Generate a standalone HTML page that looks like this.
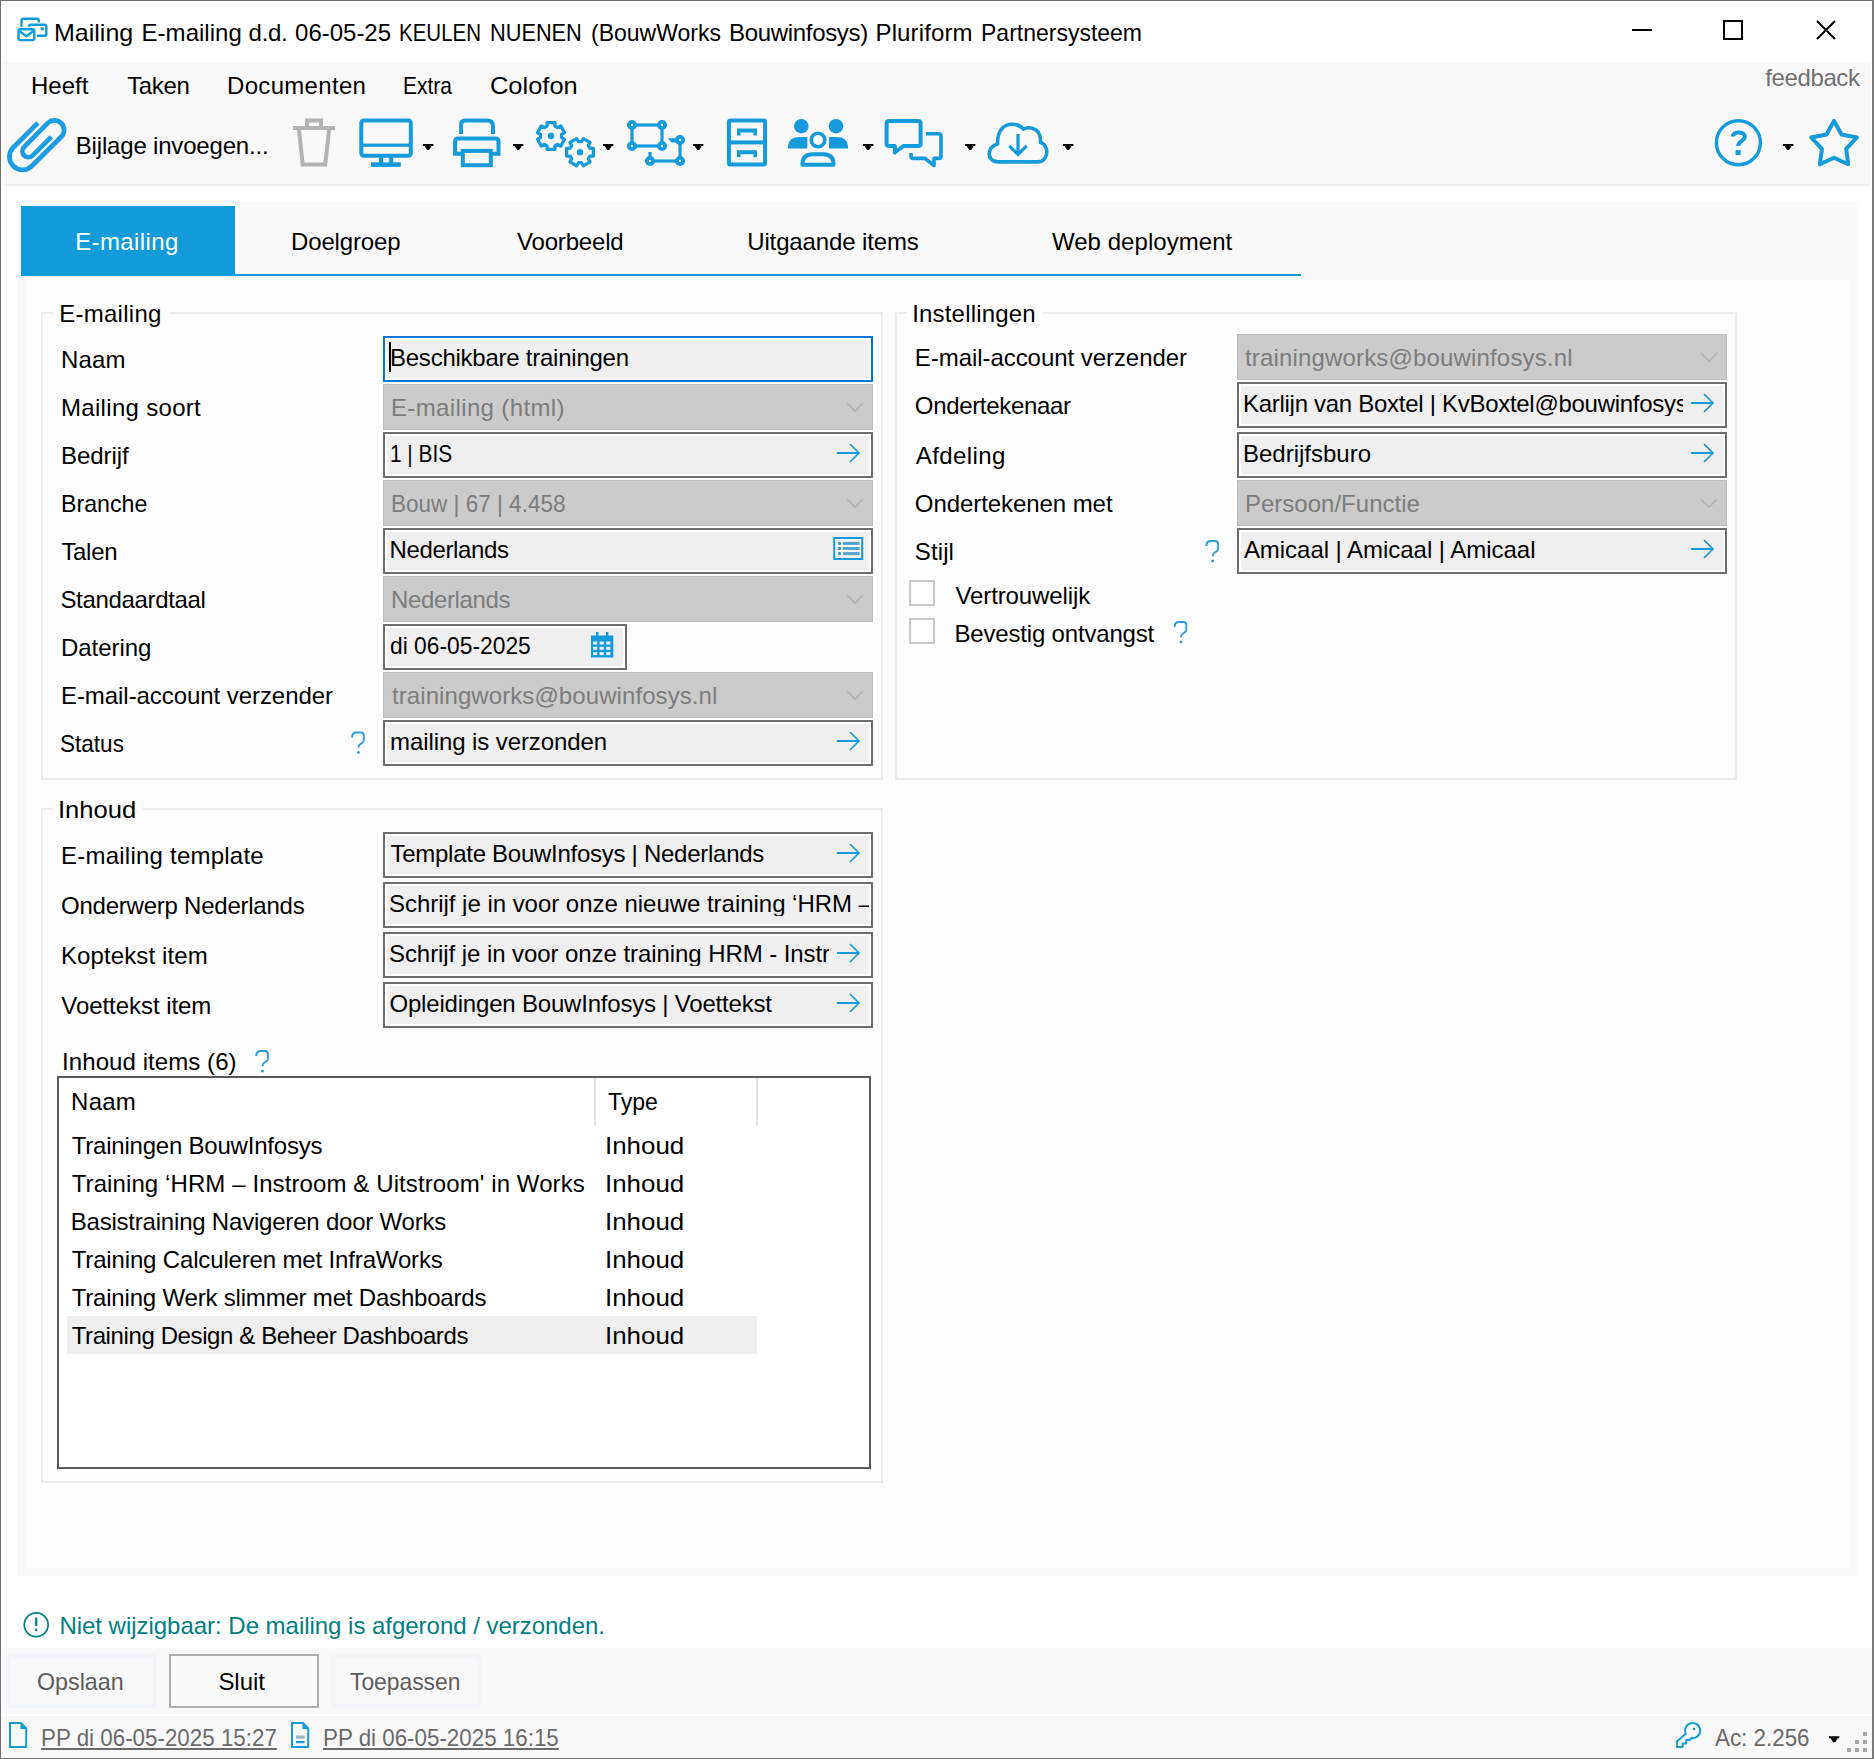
<!DOCTYPE html>
<html lang="nl"><head><meta charset="utf-8"><title>Mailing E-mailing</title>
<style>html,body{margin:0;padding:0;font-family:"Liberation Sans",sans-serif}
body{width:1874px;height:1759px;position:relative;overflow:hidden;background:#fff;font-family:"Liberation Sans",sans-serif;font-size:24px;line-height:24px;color:#000}
.b{position:absolute;box-sizing:border-box}
.t{position:absolute;white-space:pre;font-size:24px;line-height:24px;height:24px;transform-origin:0 0}
svg.ov{position:absolute;left:0;top:0}
</style></head>
<body>
<div class="b" style="left:2px;top:62px;width:1869px;height:124px;background:#f9f9f9;"></div>
<div class="b" style="left:5px;top:184px;width:1864px;height:2px;background:#eeeeee;"></div>
<div class="b" style="left:17px;top:202px;width:1840px;height:1374px;background:#f9f9f9;"></div>
<div class="b" style="left:25px;top:280px;width:1824px;height:1288px;background:#fdfdfd;"></div>
<div class="b" style="left:21px;top:206px;width:214px;height:70px;background:#129ad9;"></div>
<div class="b" style="left:21px;top:274px;width:1280px;height:2px;background:#129ad9;"></div>
<div class="b" style="left:2px;top:1648px;width:1870px;height:66px;background:#f9f9f9;"></div>
<div class="b" style="left:2px;top:1716px;width:1870px;height:43px;background:#f9f9f9;"></div>
<div class="b" style="left:41px;top:312px;width:842px;height:468px;border:2px solid #ececec;"></div>
<div class="b" style="left:53px;top:312px;width:116px;height:2px;background:#fdfdfd;"></div>
<div class="b" style="left:895px;top:312px;width:842px;height:468px;border:2px solid #ececec;"></div>
<div class="b" style="left:907px;top:312px;width:136px;height:2px;background:#fdfdfd;"></div>
<div class="b" style="left:41px;top:808px;width:842px;height:675px;border:2px solid #ececec;"></div>
<div class="b" style="left:53px;top:808px;width:90px;height:2px;background:#fdfdfd;"></div>
<div class="b" style="left:383px;top:336px;width:490px;height:46px;background:#efefef;border:2px solid #0078d7;box-shadow:inset 0 0 0 2px #fff;"></div>
<div class="b" style="left:383px;top:384px;width:490px;height:46px;background:#cbcbcb;border:1px solid #bdbdbd;"></div>
<div class="b" style="left:383px;top:432px;width:490px;height:46px;background:#efefef;border:2px solid #6e6e6e;box-shadow:inset 0 0 0 2px #fff;"></div>
<div class="b" style="left:383px;top:480px;width:490px;height:46px;background:#cbcbcb;border:1px solid #bdbdbd;"></div>
<div class="b" style="left:383px;top:528px;width:490px;height:46px;background:#efefef;border:2px solid #6e6e6e;box-shadow:inset 0 0 0 2px #fff;"></div>
<div class="b" style="left:383px;top:576px;width:490px;height:46px;background:#cbcbcb;border:1px solid #bdbdbd;"></div>
<div class="b" style="left:383px;top:624px;width:244px;height:46px;background:#efefef;border:2px solid #6e6e6e;box-shadow:inset 0 0 0 2px #fff;"></div>
<div class="b" style="left:383px;top:672px;width:490px;height:46px;background:#cbcbcb;border:1px solid #bdbdbd;"></div>
<div class="b" style="left:383px;top:720px;width:490px;height:46px;background:#efefef;border:2px solid #6e6e6e;box-shadow:inset 0 0 0 2px #fff;"></div>
<div class="b" style="left:389px;top:342px;width:2px;height:30px;background:#000;"></div>
<div class="b" style="left:1237px;top:334px;width:490px;height:46px;background:#cbcbcb;border:1px solid #bdbdbd;"></div>
<div class="b" style="left:1237px;top:382px;width:490px;height:46px;background:#efefef;border:2px solid #6e6e6e;box-shadow:inset 0 0 0 2px #fff;"></div>
<div class="b" style="left:1237px;top:432px;width:490px;height:46px;background:#efefef;border:2px solid #6e6e6e;box-shadow:inset 0 0 0 2px #fff;"></div>
<div class="b" style="left:1237px;top:480px;width:490px;height:46px;background:#cbcbcb;border:1px solid #bdbdbd;"></div>
<div class="b" style="left:1237px;top:528px;width:490px;height:46px;background:#efefef;border:2px solid #6e6e6e;box-shadow:inset 0 0 0 2px #fff;"></div>
<div class="b" style="left:383px;top:832px;width:490px;height:46px;background:#efefef;border:2px solid #6e6e6e;box-shadow:inset 0 0 0 2px #fff;"></div>
<div class="b" style="left:383px;top:882px;width:490px;height:46px;background:#efefef;border:2px solid #6e6e6e;box-shadow:inset 0 0 0 2px #fff;"></div>
<div class="b" style="left:383px;top:932px;width:490px;height:46px;background:#efefef;border:2px solid #6e6e6e;box-shadow:inset 0 0 0 2px #fff;"></div>
<div class="b" style="left:383px;top:982px;width:490px;height:46px;background:#efefef;border:2px solid #6e6e6e;box-shadow:inset 0 0 0 2px #fff;"></div>
<div class="b" style="left:909px;top:580px;width:26px;height:26px;background:#fff;border:2px solid #c9c9c9;"></div>
<div class="b" style="left:909px;top:618px;width:26px;height:26px;background:#fff;border:2px solid #c9c9c9;"></div>
<div class="b" style="left:57px;top:1076px;width:814px;height:393px;background:#fff;border:2px solid #5a5a5a;"></div>
<div class="b" style="left:67px;top:1316px;width:690px;height:38px;background:#efefef;"></div>
<div class="b" style="left:594px;top:1078px;width:2px;height:48px;background:#e3e3e3;"></div>
<div class="b" style="left:756px;top:1078px;width:2px;height:48px;background:#e3e3e3;"></div>
<div class="b" style="left:7px;top:1654px;width:150px;height:54px;background:#f9f9f9;border:4px solid #f2f6fb;"></div>
<div class="b" style="left:169px;top:1654px;width:150px;height:54px;background:#fbfbfb;border:2px solid #adadad;"></div>
<div class="b" style="left:331px;top:1654px;width:150px;height:54px;background:#f9f9f9;border:4px solid #f4f6fa;"></div>
<div class="b" style="left:0px;top:1714px;width:1874px;height:2px;background:#fff;"></div>
<div class="b" style="left:0px;top:0px;width:1874px;height:1px;background:#6f6f6f;"></div>
<div class="b" style="left:0px;top:0px;width:1px;height:1759px;background:#6f6f6f;"></div>
<div class="b" style="left:1872px;top:0px;width:2px;height:1759px;background:#7a7a7a;"></div>
<div class="b" style="left:0px;top:1758px;width:1874px;height:1px;background:#777;"></div>
<svg class="ov" width="1874" height="1759" viewBox="0 0 1874 1759">
<path d="M847 403 L855 411 L863 403" fill="none" stroke="#b2b2b2" stroke-width="1.6"/>
<rect x="837" y="452" width="22" height="2" fill="#159bdb"/><path d="M850 444 L859 453 L850 462" fill="none" stroke="#159bdb" stroke-width="1.6"/>
<path d="M847 499 L855 507 L863 499" fill="none" stroke="#b2b2b2" stroke-width="1.6"/>
<path d="M847 595 L855 603 L863 595" fill="none" stroke="#b2b2b2" stroke-width="1.6"/>
<path d="M847 691 L855 699 L863 691" fill="none" stroke="#b2b2b2" stroke-width="1.6"/>
<rect x="837" y="740" width="22" height="2" fill="#159bdb"/><path d="M850 732 L859 741 L850 750" fill="none" stroke="#159bdb" stroke-width="1.6"/>
<path d="M1701 353 L1709 361 L1717 353" fill="none" stroke="#b2b2b2" stroke-width="1.6"/>
<rect x="1691" y="402" width="22" height="2" fill="#159bdb"/><path d="M1704 394 L1713 403 L1704 412" fill="none" stroke="#159bdb" stroke-width="1.6"/>
<rect x="1691" y="452" width="22" height="2" fill="#159bdb"/><path d="M1704 444 L1713 453 L1704 462" fill="none" stroke="#159bdb" stroke-width="1.6"/>
<path d="M1701 499 L1709 507 L1717 499" fill="none" stroke="#b2b2b2" stroke-width="1.6"/>
<rect x="1691" y="548" width="22" height="2" fill="#159bdb"/><path d="M1704 540 L1713 549 L1704 558" fill="none" stroke="#159bdb" stroke-width="1.6"/>
<rect x="837" y="852" width="22" height="2" fill="#159bdb"/><path d="M850 844 L859 853 L850 862" fill="none" stroke="#159bdb" stroke-width="1.6"/>
<rect x="837" y="952" width="22" height="2" fill="#159bdb"/><path d="M850 944 L859 953 L850 962" fill="none" stroke="#159bdb" stroke-width="1.6"/>
<rect x="837" y="1002" width="22" height="2" fill="#159bdb"/><path d="M850 994 L859 1003 L850 1012" fill="none" stroke="#159bdb" stroke-width="1.6"/>
<path d="M352.1 737.5 Q352.1 732.5 356.5 732.5 H361.0 Q363.8 732.5 363.8 735.3 V740.2 Q363.8 742 362.1 743 L360.1 744.2 Q358.5 745.2 358.5 747.8" fill="none" stroke="#2d9cdb" stroke-width="1.9"/><rect x="357.1" y="751.3" width="2.6" height="2.4" fill="#2d9cdb"/>
<path d="M1206.3999999999999 546.0 Q1206.3999999999999 541.0 1210.8 541.0 H1215.3 Q1218.1 541.0 1218.1 543.8 V548.7 Q1218.1 550.5 1216.3999999999999 551.5 L1214.3999999999999 552.7 Q1212.8 553.7 1212.8 556.3" fill="none" stroke="#2d9cdb" stroke-width="1.9"/><rect x="1211.3999999999999" y="559.8" width="2.6" height="2.4" fill="#2d9cdb"/>
<path d="M1174.6 627.0 Q1174.6 622.0 1179 622.0 H1183.5 Q1186.3 622.0 1186.3 624.8 V629.7 Q1186.3 631.5 1184.6 632.5 L1182.6 633.7 Q1181 634.7 1181 637.3" fill="none" stroke="#2d9cdb" stroke-width="1.9"/><rect x="1179.6" y="640.8" width="2.6" height="2.4" fill="#2d9cdb"/>
<path d="M256.2 1056.0 Q256.2 1051.0 260.6 1051.0 H265.1 Q267.9 1051.0 267.9 1053.8 V1058.7 Q267.9 1060.5 266.2 1061.5 L264.2 1062.7 Q262.6 1063.7 262.6 1066.3" fill="none" stroke="#2d9cdb" stroke-width="1.9"/><rect x="261.2" y="1069.8" width="2.6" height="2.4" fill="#2d9cdb"/>
<path d="M21.5 25.8 V20.6 Q21.5 18.7 23.4 18.7 H36.9 Q38.8 18.7 38.8 20.6 V21.4" fill="none" stroke="#119adc" stroke-width="2.4" stroke-linecap="round"/>
<path d="M29 25.8 Q29.4 24.8 31 24.8 H44.4 Q46.3 24.8 46.3 26.7 V33.9 Q46.3 35.8 44.4 35.8 H38" fill="none" stroke="#119adc" stroke-width="2.4" stroke-linecap="round"/>
<rect x="40.7" y="27.3" width="3.1" height="3.1" rx="0.8" fill="#119adc"/>
<rect x="18.5" y="29.2" width="15.8" height="10.9" rx="2" fill="none" stroke="#119adc" stroke-width="2.4"/>
<path d="M19.6 31.3 L26.4 36.3 L33.2 31.3" fill="none" stroke="#119adc" stroke-width="2.4" stroke-linejoin="round"/>
<rect x="1632" y="29" width="20" height="2" fill="#000"/>
<rect x="1724" y="21" width="18" height="18" fill="none" stroke="#000" stroke-width="2"/>
<path d="M1817 21 L1835 39 M1835 21 L1817 39" stroke="#000" stroke-width="2" fill="none"/>
<path d="M37.93 122.85 L13.04 147.74 A13.1 13.1 0 0 0 31.56 166.26 L61.29 136.79 A9.6 9.6 0 0 0 47.71 123.21 L24.06 147.16 A6.0 6.0 0 0 0 32.54 155.64 L51.35 136.83" fill="none" stroke="#1c9ce5" stroke-width="4.7" />
<rect x="293" y="126" width="42" height="4" fill="#b3b3b3"/>
<path d="M307 127 V120.5 H321 V127" fill="none" stroke="#b3b3b3" stroke-width="4" />
<path d="M299 130 L302.7 164.5 H325.3 L329 130" fill="none" stroke="#b3b3b3" stroke-width="4" stroke-linejoin="miter"/>
<rect x="361.3" y="120.5" width="49.5" height="35.3" rx="2.5" fill="none" stroke="#159bdb" stroke-width="4"/>
<rect x="361" y="143.6" width="50" height="3.2" fill="#159bdb"/>
<rect x="379" y="157" width="4" height="6" fill="#159bdb"/><rect x="389.2" y="157" width="4" height="6" fill="#159bdb"/>
<rect x="371" y="162.3" width="29.8" height="4.6" fill="#159bdb"/>
<path d="M423 144 H433.4 V146 H431.79999999999995 L429.2 150 H427.2 L424.6 146 H423 Z" fill="#000"/>
<path d="M461.1 134 V124.5 Q461.1 120.5 465.1 120.5 H487 Q493 120.5 493 126.5 V134" fill="none" stroke="#159bdb" stroke-width="4" />
<path d="M462.8 153.7 H455.1 V141.5 Q455.1 138.5 458.1 138.5 H495.5 Q498.5 138.5 498.5 141.5 V153.7 H491" fill="none" stroke="#159bdb" stroke-width="4" />
<rect x="462.8" y="150.9" width="28" height="14.3" fill="none" stroke="#159bdb" stroke-width="4"/>
<path d="M513 144 H523.4 V146 H521.8 L519.2 150 H517.2 L514.6 146 H513 Z" fill="#000"/>
<path d="M547.1 122.6 L554.9 122.6 L554.9 126.1 L557.6 127.7 L560.7 125.9 L564.6 132.7 L561.5 134.5 L561.5 137.5 L564.6 139.3 L560.7 146.1 L557.6 144.3 L554.9 145.9 L554.9 149.4 L547.1 149.4 L547.1 145.9 L544.4 144.3 L541.3 146.1 L537.4 139.3 L540.5 137.5 L540.5 134.5 L537.4 132.7 L541.3 125.9 L544.4 127.7 L547.1 126.1 Z" fill="none" stroke="#159bdb" stroke-width="3.2" stroke-linejoin="round"/>
<circle cx="551" cy="136" r="3.2" fill="#159bdb"/>
<path d="M583.3 138.6 L590.1 142.5 L588.3 145.6 L589.9 148.3 L593.4 148.3 L593.4 156.1 L589.9 156.1 L588.3 158.8 L590.1 161.9 L583.3 165.8 L581.5 162.7 L578.5 162.7 L576.7 165.8 L569.9 161.9 L571.7 158.8 L570.1 156.1 L566.6 156.1 L566.6 148.3 L570.1 148.3 L571.7 145.6 L569.9 142.5 L576.7 138.6 L578.5 141.7 L581.5 141.7 Z" fill="none" stroke="#159bdb" stroke-width="3.2" stroke-linejoin="round"/>
<circle cx="580" cy="152.2" r="3.2" fill="#159bdb"/>
<path d="M603 144 H613.4 V146 H611.8 L609.2 150 H607.2 L604.6 146 H603 Z" fill="#000"/>
<path d="M632 125 L662 125" fill="none" stroke="#159bdb" stroke-width="3.2" />
<path d="M632 125 L632 146" fill="none" stroke="#159bdb" stroke-width="3.2" />
<path d="M662 125 L662 146" fill="none" stroke="#159bdb" stroke-width="3.2" />
<path d="M632 146 L662 146" fill="none" stroke="#159bdb" stroke-width="3.2" />
<path d="M680 140 L680 161" fill="none" stroke="#159bdb" stroke-width="3.2" />
<path d="M650 161 L680 161" fill="none" stroke="#159bdb" stroke-width="3.2" />
<path d="M650 161 V152" fill="none" stroke="#159bdb" stroke-width="3.2" />
<path d="M668 138.2 H676 V142.5 H671.5 Z" fill="#159bdb"/>
<circle cx="632" cy="125" r="3.1" fill="#f9f9f9" stroke="#159bdb" stroke-width="3.9"/>
<circle cx="662" cy="125" r="3.1" fill="#f9f9f9" stroke="#159bdb" stroke-width="3.9"/>
<circle cx="632" cy="146" r="3.1" fill="#f9f9f9" stroke="#159bdb" stroke-width="3.9"/>
<circle cx="662" cy="146" r="3.1" fill="#f9f9f9" stroke="#159bdb" stroke-width="3.9"/>
<circle cx="680" cy="140" r="3.1" fill="#f9f9f9" stroke="#159bdb" stroke-width="3.9"/>
<circle cx="650" cy="161" r="3.1" fill="#f9f9f9" stroke="#159bdb" stroke-width="3.9"/>
<circle cx="680" cy="161" r="3.1" fill="#f9f9f9" stroke="#159bdb" stroke-width="3.9"/>
<path d="M693 144 H703.4 V146 H701.8 L699.2 150 H697.2 L694.6 146 H693 Z" fill="#000"/>
<rect x="728.9" y="120.5" width="36.2" height="44" rx="1.5" fill="none" stroke="#159bdb" stroke-width="4"/>
<rect x="728" y="140.4" width="38" height="4" fill="#159bdb"/>
<path d="M737 128.4 H757 V135.4 H753.5 V132.4 H740.5 V135.4 H737 Z" fill="#159bdb"/>
<path d="M737 150.3 H757 V157.3 H753.5 V154.3 H740.5 V157.3 H737 Z" fill="#159bdb"/>
<circle cx="801.3" cy="126.2" r="7.3" fill="#159bdb"/><circle cx="836" cy="126.2" r="7.3" fill="#159bdb"/>
<path d="M788 148.4 V146 Q788.5 137 800 137 H807.3 V148.4 Z" fill="#159bdb"/>
<path d="M848 148.4 V146 Q847.5 137 836 137 H829 V148.4 Z" fill="#159bdb"/>
<circle cx="818" cy="140" r="6.8" fill="#f9f9f9" stroke="#159bdb" stroke-width="3.6"/>
<path d="M802.5 164.8 V163 Q803 154.3 813 154.3 H823 Q833 154.3 833.5 163 V164.8 Z" fill="none" stroke="#159bdb" stroke-width="4" stroke-linejoin="round"/>
<path d="M863 144 H873.4 V146 H871.8 L869.2 150 H867.2 L864.6 146 H863 Z" fill="#000"/>
<path d="M886.6 123.5 Q886.6 121 889.1 121 H918.1 Q920.6 121 920.6 123.5 V143.5 Q920.6 146 918.1 146 H903.5 L894.8 152.5 V146 H889.1 Q886.6 146 886.6 143.5 Z" fill="none" stroke="#159bdb" stroke-width="4" stroke-linejoin="round"/>
<path d="M926 133.8 H938.5 Q941 133.8 941 136.3 V155.9 Q941 158.4 938.5 158.4 H934 V165.5 L925 158.4 H913.5 Q911 158.4 911 155.9 V153" fill="none" stroke="#159bdb" stroke-width="3.6" stroke-linejoin="round"/>
<path d="M965 144 H975.4 V146 H973.8 L971.2 150 H969.2 L966.6 146 H965 Z" fill="#000"/>
<path d="M998.5 161.9 C986 161.9 986.5 146.5 997.6 144 C997 131 1003.5 124.3 1012 124.3 C1017.5 124.3 1021 126.3 1023.2 129.2 C1026 127.6 1030 127.6 1032.5 128.4 C1038.5 130 1041 135.5 1040.4 142.6 C1049.6 145 1049 161.9 1037.5 161.9 Z" fill="none" stroke="#159bdb" stroke-width="3.6" stroke-linejoin="round"/>
<path d="M1018 134 V154.5 M1009.3 145.8 L1018 154.5 L1026.7 145.8" fill="none" stroke="#159bdb" stroke-width="3.2" />
<path d="M1063 144 H1073.4 V146 H1071.8000000000002 L1069.2 150 H1067.2 L1064.6 146 H1063 Z" fill="#000"/>
<circle cx="1738.4" cy="142.7" r="22.0" fill="none" stroke="#159bdb" stroke-width="3.4"/>
<path d="M1732.8 136.6 C1732.8 131.0 1744.8 131.0 1744.8 136.8 C1744.8 140.8 1738.2 141.0 1738.2 146.0" fill="none" stroke="#159bdb" stroke-width="4.0" />
<rect x="1735.6" y="150.1" width="5.0" height="5.0" fill="#159bdb"/>
<path d="M1783 144 H1793.4 V146 H1791.8000000000002 L1789.2 150 H1787.2 L1784.6 146 H1783 Z" fill="#000"/>
<path d="M1834.0 120.9 L1841.6 134.5 L1856.9 137.5 L1846.2 148.9 L1848.2 164.3 L1834.0 157.7 L1819.9 164.3 L1821.9 148.9 L1811.2 137.5 L1826.5 134.5 Z" fill="none" stroke="#159bdb" stroke-width="4.0" stroke-linejoin="round"/>
<rect x="834.2" y="538" width="28" height="21" fill="#f4f4f4" stroke="#159bdb" stroke-width="2"/>
<rect x="838.2" y="541.9" width="2.6" height="3" fill="#159bdb"/><rect x="843" y="541.9" width="16.5" height="3" fill="#4fa3d1"/>
<rect x="838.2" y="547.0" width="2.6" height="3" fill="#159bdb"/><rect x="843" y="547.0" width="16.5" height="3" fill="#4fa3d1"/>
<rect x="838.2" y="552.1" width="2.6" height="3" fill="#159bdb"/><rect x="843" y="552.1" width="16.5" height="3" fill="#4fa3d1"/>
<rect x="591" y="635.5" width="22.3" height="22" fill="#159bdb"/>
<rect x="596" y="632" width="2.4" height="5" fill="#159bdb"/><rect x="606" y="632" width="2.4" height="5" fill="#159bdb"/>
<rect x="593.0" y="641.5" width="4.2" height="3" fill="#e9eef2"/>
<rect x="599.6" y="641.5" width="4.2" height="3" fill="#e9eef2"/>
<rect x="606.2" y="641.5" width="4.2" height="3" fill="#e9eef2"/>
<rect x="593.0" y="646.8" width="4.2" height="3" fill="#e9eef2"/>
<rect x="599.6" y="646.8" width="4.2" height="3" fill="#e9eef2"/>
<rect x="606.2" y="646.8" width="4.2" height="3" fill="#e9eef2"/>
<rect x="593.0" y="652.1" width="4.2" height="3" fill="#e9eef2"/>
<rect x="599.6" y="652.1" width="4.2" height="3" fill="#e9eef2"/>
<rect x="606.2" y="652.1" width="4.2" height="3" fill="#e9eef2"/>
<circle cx="36.2" cy="1624.7" r="11.9" fill="none" stroke="#008080" stroke-width="1.7"/>
<rect x="35.1" y="1617.5" width="2.2" height="8.5" fill="#008080"/><rect x="35.1" y="1628.6" width="2.2" height="2.6" fill="#008080"/>
<path d="M10 1723 H21 L26.2 1728.5 V1747 H10 Z" fill="none" stroke="#159bdb" stroke-width="2" />
<path d="M20.5 1723 L26.5 1729 H20.5 Z" fill="#159bdb"/>
<path d="M292 1723 H303 L308.2 1728.5 V1747 H292 Z" fill="none" stroke="#159bdb" stroke-width="2" />
<path d="M302.5 1723 L308.5 1729 H302.5 Z" fill="#159bdb"/>
<rect x="296" y="1735.5" width="8.5" height="3.2" fill="#9ab4c4"/><rect x="296" y="1741" width="8.5" height="2.2" fill="#159bdb"/>
<path d="M1685.7 1733.8 L1676.9 1741.4 V1747 H1682.6 V1743.6 H1686.2 V1740.1 H1689.6 L1691.3 1738.1 A7.6 7.6 0 1 0 1685.7 1733.8 Z" fill="none" stroke="#159bdb" stroke-width="2.0" stroke-linejoin="round"/>
<circle cx="1694" cy="1729" r="1.3" fill="#159bdb"/>
<path d="M1829 1736.3 H1839.4 V1738.3 H1837.8000000000002 L1835.2 1742.3 H1833.2 L1830.6 1738.3 H1829 Z" fill="#000"/>
<rect x="1863" y="1732" width="4" height="4" fill="#a6a6a6"/>
<rect x="1855" y="1740" width="4" height="4" fill="#a6a6a6"/>
<rect x="1863" y="1740" width="4" height="4" fill="#a6a6a6"/>
<rect x="1847" y="1748" width="4" height="4" fill="#a6a6a6"/>
<rect x="1855" y="1748" width="4" height="4" fill="#a6a6a6"/>
<rect x="1863" y="1748" width="4" height="4" fill="#a6a6a6"/>
</svg>
<span class="t" style="left:54.36px;top:21.00px;transform:scaleX(1.0423);">Mailing</span>
<span class="t" style="left:141.60px;top:21.00px;letter-spacing:0.015px;">E-mailing</span>
<span class="t" style="left:248.60px;top:21.00px;letter-spacing:-0.288px;">d.d.</span>
<span class="t" style="left:295.10px;top:21.00px;letter-spacing:-0.018px;">06-05-25</span>
<span class="t" style="left:399.45px;top:21.00px;transform:scaleX(0.8548);">KEULEN</span>
<span class="t" style="left:489.89px;top:21.00px;transform:scaleX(0.9060);">NUENEN</span>
<span class="t" style="left:590.84px;top:21.00px;transform:scaleX(0.9585);">(BouwWorks</span>
<span class="t" style="left:729.10px;top:21.00px;letter-spacing:-0.330px;">Bouwinfosys)</span>
<span class="t" style="left:875.50px;top:21.00px;letter-spacing:0.123px;">Pluriform</span>
<span class="t" style="left:980.74px;top:21.00px;transform:scaleX(0.9581);">Partnersysteem</span>
<span class="t" style="left:31.00px;top:74.00px;letter-spacing:0.026px;">Heeft</span>
<span class="t" style="left:127.20px;top:74.00px;letter-spacing:-0.349px;">Taken</span>
<span class="t" style="left:227.00px;top:74.00px;letter-spacing:0.319px;">Documenten</span>
<span class="t" style="left:402.83px;top:74.00px;transform:scaleX(0.8748);">Extra</span>
<span class="t" style="left:490.44px;top:74.00px;transform:scaleX(1.0600);">Colofon</span>
<span class="t" style="left:1765.20px;top:66.00px;letter-spacing:-0.372px;color:#707070;">feedback</span>
<span class="t" style="left:75.80px;top:134.00px;letter-spacing:-0.182px;">Bijlage invoegen...</span>
<span class="t" style="left:75.20px;top:230.00px;letter-spacing:0.390px;color:#fff;">E-mailing</span>
<span class="t" style="left:291.00px;top:230.00px;letter-spacing:-0.149px;">Doelgroep</span>
<span class="t" style="left:517.00px;top:230.00px;letter-spacing:-0.181px;">Voorbeeld</span>
<span class="t" style="left:747.20px;top:230.00px;letter-spacing:-0.130px;">Uitgaande items</span>
<span class="t" style="left:1051.90px;top:230.00px;letter-spacing:0.054px;">Web deployment</span>
<span class="t" style="left:59.20px;top:302.00px;letter-spacing:0.265px;">E-mailing</span>
<span class="t" style="left:912.20px;top:302.00px;letter-spacing:0.185px;">Instellingen</span>
<span class="t" style="left:58.07px;top:798.00px;transform:scaleX(1.0648);">Inhoud</span>
<span class="t" style="left:61.00px;top:348.00px;letter-spacing:0.124px;">Naam</span>
<span class="t" style="left:61.00px;top:396.00px;letter-spacing:0.309px;">Mailing soort</span>
<span class="t" style="left:61.00px;top:444.00px;letter-spacing:-0.077px;">Bedrijf</span>
<span class="t" style="left:61.03px;top:492.00px;transform:scaleX(0.9654);">Branche</span>
<span class="t" style="left:61.40px;top:540.00px;letter-spacing:-0.307px;">Talen</span>
<span class="t" style="left:60.40px;top:588.00px;letter-spacing:-0.326px;">Standaardtaal</span>
<span class="t" style="left:61.00px;top:636.00px;letter-spacing:-0.052px;">Datering</span>
<span class="t" style="left:61.00px;top:684.00px;letter-spacing:-0.063px;">E-mail-account verzender</span>
<span class="t" style="left:60.46px;top:732.00px;transform:scaleX(0.9398);">Status</span>
<span class="t" style="left:390.00px;top:346.00px;letter-spacing:-0.243px;">Beschikbare trainingen</span>
<span class="t" style="left:391.00px;top:396.00px;letter-spacing:0.365px;color:#7d7d7d;">E-mailing (html)</span>
<span class="t" style="left:390.13px;top:442.00px;transform:scaleX(0.8679);">1 | BIS</span>
<span class="t" style="left:391.06px;top:492.00px;transform:scaleX(0.9383);color:#7d7d7d;">Bouw | 67 | 4.458</span>
<span class="t" style="left:389.50px;top:538.00px;letter-spacing:-0.360px;">Nederlands</span>
<span class="t" style="left:391.00px;top:588.00px;letter-spacing:-0.360px;color:#7d7d7d;">Nederlands</span>
<span class="t" style="left:389.55px;top:634.00px;transform:scaleX(0.9505);">di 06-05-2025</span>
<span class="t" style="left:392.00px;top:684.00px;letter-spacing:0.080px;color:#7d7d7d;">trainingworks@bouwinfosys.nl</span>
<span class="t" style="left:390.00px;top:730.00px;letter-spacing:-0.086px;">mailing is verzonden</span>
<span class="t" style="left:914.80px;top:346.00px;letter-spacing:-0.054px;">E-mail-account verzender</span>
<span class="t" style="left:914.80px;top:394.00px;letter-spacing:-0.326px;">Ondertekenaar</span>
<span class="t" style="left:915.80px;top:444.00px;letter-spacing:0.402px;">Afdeling</span>
<span class="t" style="left:914.80px;top:492.00px;letter-spacing:-0.068px;">Ondertekenen met</span>
<span class="t" style="left:914.80px;top:540.00px;letter-spacing:0.115px;">Stijl</span>
<span class="t" style="left:1245.00px;top:346.00px;letter-spacing:0.162px;color:#7d7d7d;">trainingworks@bouwinfosys.nl</span>
<span class="t" style="left:1243.00px;top:392.00px;letter-spacing:-0.286px;width:440.0px;overflow:hidden;">Karlijn van Boxtel | KvBoxtel@bouwinfosys.nl</span>
<span class="t" style="left:1243.00px;top:442.00px;letter-spacing:-0.001px;">Bedrijfsburo</span>
<span class="t" style="left:1245.00px;top:492.00px;letter-spacing:0.006px;color:#7d7d7d;">Persoon/Functie</span>
<span class="t" style="left:1243.90px;top:538.00px;letter-spacing:-0.038px;">Amicaal | Amicaal | Amicaal</span>
<span class="t" style="left:955.40px;top:584.00px;letter-spacing:-0.096px;">Vertrouwelijk</span>
<span class="t" style="left:954.40px;top:622.00px;letter-spacing:-0.172px;">Bevestig ontvangst</span>
<span class="t" style="left:61.00px;top:844.00px;letter-spacing:0.229px;">E-mailing template</span>
<span class="t" style="left:61.00px;top:894.00px;letter-spacing:-0.233px;">Onderwerp Nederlands</span>
<span class="t" style="left:61.00px;top:944.00px;letter-spacing:0.108px;">Koptekst item</span>
<span class="t" style="left:61.30px;top:994.00px;letter-spacing:-0.057px;">Voettekst item</span>
<span class="t" style="left:390.50px;top:842.00px;letter-spacing:-0.270px;">Template BouwInfosys | Nederlands</span>
<span class="t" style="left:389.00px;top:892.00px;letter-spacing:-0.028px;width:480.0px;overflow:hidden;">Schrijf je in voor onze nieuwe training ‘HRM – Instroom</span>
<span class="t" style="left:389.00px;top:942.00px;letter-spacing:-0.071px;width:440.0px;overflow:hidden;">Schrijf je in voor onze training HRM - Instroom</span>
<span class="t" style="left:389.50px;top:992.00px;letter-spacing:-0.196px;">Opleidingen BouwInfosys | Voettekst</span>
<span class="t" style="left:62.10px;top:1050.00px;letter-spacing:0.072px;">Inhoud items (6)</span>
<span class="t" style="left:71.10px;top:1090.00px;letter-spacing:0.224px;">Naam</span>
<span class="t" style="left:607.60px;top:1090.00px;transform:scaleX(0.9597);">Type</span>
<span class="t" style="left:71.70px;top:1134.00px;letter-spacing:-0.212px;">Trainingen BouwInfosys</span>
<span class="t" style="left:605.44px;top:1134.00px;transform:scaleX(1.0791);">Inhoud</span>
<span class="t" style="left:71.70px;top:1172.00px;letter-spacing:0.098px;">Training ‘HRM – Instroom &amp; Uitstroom&#x27; in Works</span>
<span class="t" style="left:605.44px;top:1172.00px;transform:scaleX(1.0791);">Inhoud</span>
<span class="t" style="left:70.70px;top:1210.00px;letter-spacing:-0.206px;">Basistraining Navigeren door Works</span>
<span class="t" style="left:605.44px;top:1210.00px;transform:scaleX(1.0791);">Inhoud</span>
<span class="t" style="left:71.70px;top:1248.00px;letter-spacing:-0.153px;">Training Calculeren met InfraWorks</span>
<span class="t" style="left:605.44px;top:1248.00px;transform:scaleX(1.0791);">Inhoud</span>
<span class="t" style="left:71.70px;top:1286.00px;letter-spacing:-0.190px;">Training Werk slimmer met Dashboards</span>
<span class="t" style="left:605.44px;top:1286.00px;transform:scaleX(1.0791);">Inhoud</span>
<span class="t" style="left:71.70px;top:1324.00px;letter-spacing:-0.391px;">Training Design &amp; Beheer Dashboards</span>
<span class="t" style="left:605.44px;top:1324.00px;transform:scaleX(1.0791);">Inhoud</span>
<span class="t" style="left:59.40px;top:1614.00px;letter-spacing:-0.027px;color:#008080;">Niet wijzigbaar: De mailing is afgerond / verzonden.</span>
<span class="t" style="left:37.43px;top:1670.00px;transform:scaleX(0.9685);color:#5c5c5c;">Opslaan</span>
<span class="t" style="left:218.40px;top:1670.00px;letter-spacing:-0.030px;">Sluit</span>
<span class="t" style="left:349.50px;top:1670.00px;transform:scaleX(0.9509);color:#5c5c5c;">Toepassen</span>
<span class="t" style="left:40.87px;top:1726.00px;transform:scaleX(0.9319);color:#6a6a6a;text-decoration:underline;text-decoration-thickness:2px;text-underline-offset:2px;">PP di 06-05-2025 15:27</span>
<span class="t" style="left:322.57px;top:1726.00px;transform:scaleX(0.9315);color:#6a6a6a;text-decoration:underline;text-decoration-thickness:2px;text-underline-offset:2px;">PP di 06-05-2025 16:15</span>
<span class="t" style="left:1715.00px;top:1726.00px;transform:scaleX(0.9322);color:#6a6a6a;">Ac: 2.256</span>
</body></html>
